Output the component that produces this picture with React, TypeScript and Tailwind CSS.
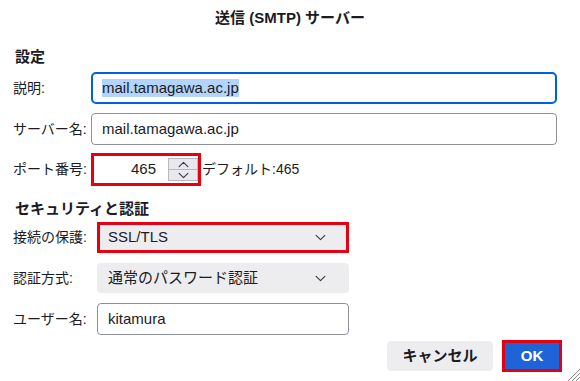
import React from "react";

const Chevron = ({ dir = "down", className = "" }: { dir?: "up" | "down"; className?: string }) => (
  <svg viewBox="0 0 12 8" className={className} fill="none" stroke="currentColor" strokeWidth="1.3" strokeLinecap="round" strokeLinejoin="round">
    {dir === "down" ? <path d="M1 1.5 L6 6.5 L11 1.5" /> : <path d="M1 6.5 L6 1.5 L11 6.5" />}
  </svg>
);

export default function App() {
  return (
    <div className="w-[580px] h-[381px] bg-white relative overflow-hidden text-[#1c1b22] font-['Liberation_Sans','Noto_Sans_CJK_JP',sans-serif]">
      {/* Title */}
      <div className="h-[36px] flex items-center justify-center text-[15px] font-bold">送信 (SMTP) サーバー</div>

      {/* 設定 */}
      <div className="mt-[11px] h-[20px] leading-[20px] pl-[15px] text-[15px] font-bold">設定</div>

      {/* 説明 */}
      <div className="mt-[5px] flex items-center h-[32px]">
        <div className="w-[91px] pl-[13px] text-[14px]">説明:</div>
        <div className="w-[466px] h-[32px] border-2 border-[#0061e0] rounded-[5px] flex items-center pl-[9px] text-[15px]">
          <span className="bg-[#b3d4fc] leading-[18px]">mail.tamagawa.ac.jp</span>
        </div>
      </div>

      {/* サーバー名 */}
      <div className="mt-[9px] flex items-center h-[32px]">
        <div className="w-[91px] pl-[13px] text-[14px]">サーバー名:</div>
        <div className="w-[466px] h-[32px] border border-[#8f8f9d] rounded-[4px] flex items-center pl-[10px] text-[15px]">
          mail.tamagawa.ac.jp
        </div>
      </div>

      {/* ポート番号 */}
      <div className="mt-[8px] flex items-center h-[33px]">
        <div className="w-[91px] pl-[13px] text-[14px]">ポート番号:</div>
        <div className="w-[110px] h-[33px] border-[3px] border-[#e50012] flex items-center bg-white">
          <div className="flex-1 text-right pr-[12px] text-[15px]">465</div>
          <div className="w-[30px] h-[23px] bg-[#e9e9ed] border border-[#b8b8c0] flex flex-col text-[#3a3944]">
            <div className="flex-1 flex items-center justify-center border-b border-[#b8b8c0]">
              <Chevron dir="up" className="w-[11px] h-[7px]" />
            </div>
            <div className="flex-1 flex items-center justify-center">
              <Chevron dir="down" className="w-[11px] h-[7px]" />
            </div>
          </div>
        </div>
        <div className="ml-[1px] text-[14px]">デフォルト:465</div>
      </div>

      {/* セキュリティと認証 */}
      <div className="mt-[13px] h-[20px] leading-[20px] pl-[15px] text-[15px] font-bold">セキュリティと認証</div>

      {/* 接続の保護 */}
      <div className="mt-[3px] flex items-center h-[31px]">
        <div className="w-[97px] pl-[13px] text-[14px]">接続の保護:</div>
        <div className="w-[252px] h-[31px] border-[3px] border-[#e50012] bg-[#ededf0] flex items-center pl-[8px] pr-[20px] text-[15px]">
          <span className="flex-1">SSL/TLS</span>
          <Chevron className="w-[11px] h-[7px] text-[#3a3944]" />
        </div>
      </div>

      {/* 認証方式 */}
      <div className="mt-[10px] flex items-center h-[30px]">
        <div className="w-[97px] pl-[13px] text-[14px]">認証方式:</div>
        <div className="w-[252px] h-[30px] rounded-[4px] bg-[#ededf0] flex items-center pl-[11px] pr-[23px] text-[15px]">
          <span className="flex-1">通常のパスワード認証</span>
          <Chevron className="w-[11px] h-[7px] text-[#3a3944]" />
        </div>
      </div>

      {/* ユーザー名 */}
      <div className="mt-[10px] flex items-center h-[32px]">
        <div className="w-[97px] pl-[13px] text-[14px]">ユーザー名:</div>
        <div className="w-[252px] h-[32px] border border-[#8f8f9d] rounded-[4px] flex items-center pl-[10px] text-[15px]">
          kitamura
        </div>
      </div>

      {/* Buttons */}
      <div className="mt-[5px] flex items-center justify-end h-[32px] pr-[18px] gap-[9px]">
        <div className="w-[106px] h-[30px] rounded-[4px] bg-[#ededf0] flex items-center justify-center text-[15px] font-bold">キャンセル</div>
        <div className="w-[60px] h-[32px] border-[3px] border-[#e50012] bg-[#1f63d8] flex items-center justify-center text-[15px] font-bold text-white">OK</div>
      </div>

      {/* resize grip */}
      <svg className="absolute right-0 bottom-0 w-[13px] h-[13px]" viewBox="0 0 13 13" stroke="#8a8a8a" strokeWidth="1">
        <path d="M13 1 L1 13" />
        <path d="M13 5 L5 13" />
        <path d="M13 9 L9 13" />
      </svg>
    </div>
  );
}
